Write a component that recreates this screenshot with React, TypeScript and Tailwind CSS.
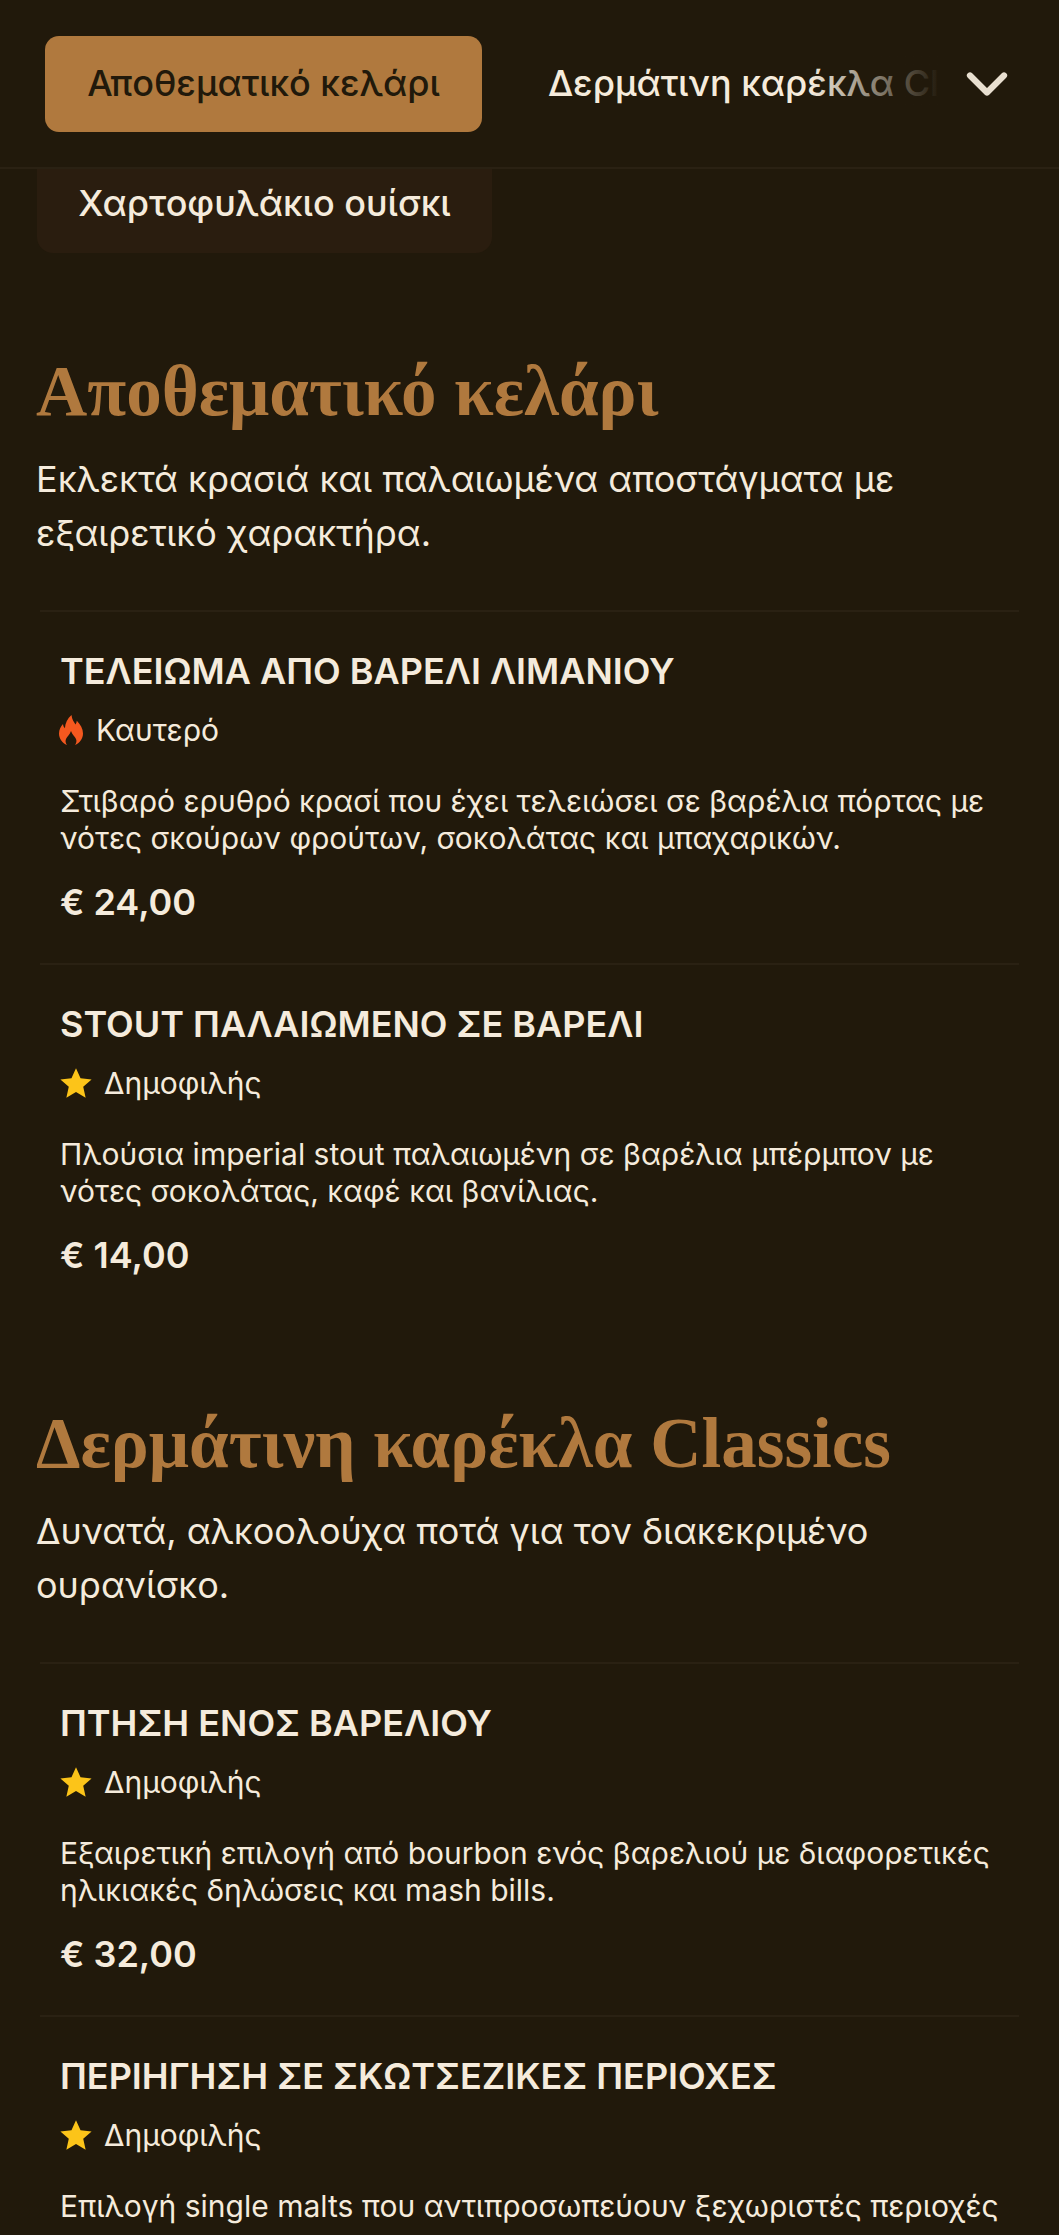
import React from 'react';
import { ChevronDown } from 'lucide-react';

type Tag = 'hot' | 'popular';

const Flame = () => (
  <svg viewBox="0 0 24 30" className="w-[24px] h-[30px] shrink-0 -ml-[1px]">
    <path
      d="M12.500 0c.4 4.600 2.400 7 4 9.500.8-1 1.200-2.200 1.300-3.700C21.500 9.500 24 14 24 18.500 24 24 20.500 28 16 30c1.500-2 1.800-4 1-6-1-2.500-3.800-4.500-5-8-1.200 3.500-4 5.500-5 8-.8 2-.5 4 1 6C3.500 28 0 24 0 18.500 0 14.500 1.800 11.500 4 9c.2 1.800.8 3.200 1.900 4.200C6.200 8.200 8.500 3.500 12.500 0Z"
      fill="#f4581f"
    />
  </svg>
);

const Star = () => (
  <svg viewBox="0 0 24 24" className="w-[34px] h-[34px] shrink-0 -ml-[1px]">
    <path d="M12 1.500l3.200 7.200 7.800.8-5.900 5.200 1.700 7.700L12 18.400l-6.800 4 1.700-7.700L1 9.500l7.800-.8L12 1.500Z" fill="#fcc419" />
  </svg>
);

const MenuItem: React.FC<{ name: string; tag: Tag; desc: string[]; price?: string }> = ({ name, tag, desc, price }) => (
  <div className="mx-[40px] border-t-2 border-[#2a2113] pl-[20px] pt-[37px] h-[353px]">
    <h3 className="text-[36px] leading-[44px] font-semibold text-[#f5ebdc]">{name}</h3>
    <div className="flex items-center mt-[20px] h-[34px] text-[30px] text-[#f5ebdc]">
      {tag === 'hot' ? <Flame /> : <Star />}
      <span className={tag === 'hot' ? 'ml-[13px]' : 'ml-[11px]'}>{tag === 'hot' ? 'Καυτερό' : 'Δημοφιλής'}</span>
    </div>
    <p className="mt-[36px] text-[30px] leading-[37px] text-[#f5ebdc]">
      {desc.map((d) => (
        <span key={d} className="block whitespace-nowrap">{d}</span>
      ))}
    </p>
    {price && <div className="mt-[22px] text-[36px] leading-[46px] font-semibold text-[#f5ebdc]">{price}</div>}
  </div>
);

const Section: React.FC<{ title: string; lines: string[]; children: React.ReactNode }> = ({ title, lines, children }) => (
  <section>
    <h2 className="mx-[36px] text-[71px] leading-[80px] font-bold text-[#b0793e] font-['Liberation_Serif',serif] whitespace-nowrap">
      {title}
    </h2>
    <p className="mx-[36px] mt-[21px] text-[36px] leading-[54px] text-[#f5ebdc]">
      {lines.map((l) => (
        <span key={l} className="block whitespace-nowrap">{l}</span>
      ))}
    </p>
    <div className="mt-[50px]">{children}</div>
  </section>
);

export default function App() {
  return (
    <div className="h-[2235px] w-[1059px] overflow-hidden bg-[#21190b] font-['Inter',sans-serif]">
      {/* Sticky category bar */}
      <header className="flex items-center h-[169px] border-b-2 border-[#2a2113] pl-[45px] pr-[50px]">
        <button className="w-[437px] h-[96px] pb-[2px] rounded-[14px] bg-[#b0793e] text-[#21190b] text-[36px] font-medium shrink-0">
          Αποθεματικό κελάρι
        </button>
        <div className="relative ml-[66px] -mt-[2px] w-[392px] overflow-hidden whitespace-nowrap text-[36px] font-medium text-[#f5ebdc]">
          Δερμάτινη καρέκλα Classics
          <div className="absolute inset-y-0 right-0 w-[130px] bg-gradient-to-r from-transparent to-[#21190b]" />
        </div>
        <ChevronDown className="ml-auto w-[68px] h-[68px] text-[#e8dfd0] -mr-[12px]" strokeWidth={2.2} />
      </header>

      <div className="ml-[37px] w-[455px] h-[84px] pb-[17px] rounded-b-[16px] bg-[#2a1d0f] flex items-center justify-center text-[36px] font-medium text-[#f5ebdc]">
        Χαρτοφυλάκιο ουίσκι
      </div>

      <div className="pt-[98px]">
        <Section title="Αποθεματικό κελάρι" lines={['Εκλεκτά κρασιά και παλαιωμένα αποστάγματα με', 'εξαιρετικό χαρακτήρα.']}>
          <MenuItem
            name="ΤΕΛΕΙΩΜΑ ΑΠΟ ΒΑΡΕΛΙ ΛΙΜΑΝΙΟΥ"
            tag="hot"
            desc={['Στιβαρό ερυθρό κρασί που έχει τελειώσει σε βαρέλια πόρτας με', 'νότες σκούρων φρούτων, σοκολάτας και μπαχαρικών.']}
            price="€ 24,00"
          />
          <MenuItem
            name="STOUT ΠΑΛΑΙΩΜΕΝΟ ΣΕ ΒΑΡΕΛΙ"
            tag="popular"
            desc={['Πλούσια imperial stout παλαιωμένη σε βαρέλια μπέρμπον με', 'νότες σοκολάτας, καφέ και βανίλιας.']}
            price="€ 14,00"
          />
        </Section>

        <div className="mt-[87px]">
          <Section title="Δερμάτινη καρέκλα Classics" lines={['Δυνατά, αλκοολούχα ποτά για τον διακεκριμένο', 'ουρανίσκο.']}>
            <MenuItem
              name="ΠΤΗΣΗ ΕΝΟΣ ΒΑΡΕΛΙΟΥ"
              tag="popular"
              desc={['Εξαιρετική επιλογή από bourbon ενός βαρελιού με διαφορετικές', 'ηλικιακές δηλώσεις και mash bills.']}
              price="€ 32,00"
            />
            <MenuItem
              name="ΠΕΡΙΗΓΗΣΗ ΣΕ ΣΚΩΤΣΕΖΙΚΕΣ ΠΕΡΙΟΧΕΣ"
              tag="popular"
              desc={['Επιλογή single malts που αντιπροσωπεύουν ξεχωριστές περιοχές']}
            />
          </Section>
        </div>
      </div>
    </div>
  );
}
